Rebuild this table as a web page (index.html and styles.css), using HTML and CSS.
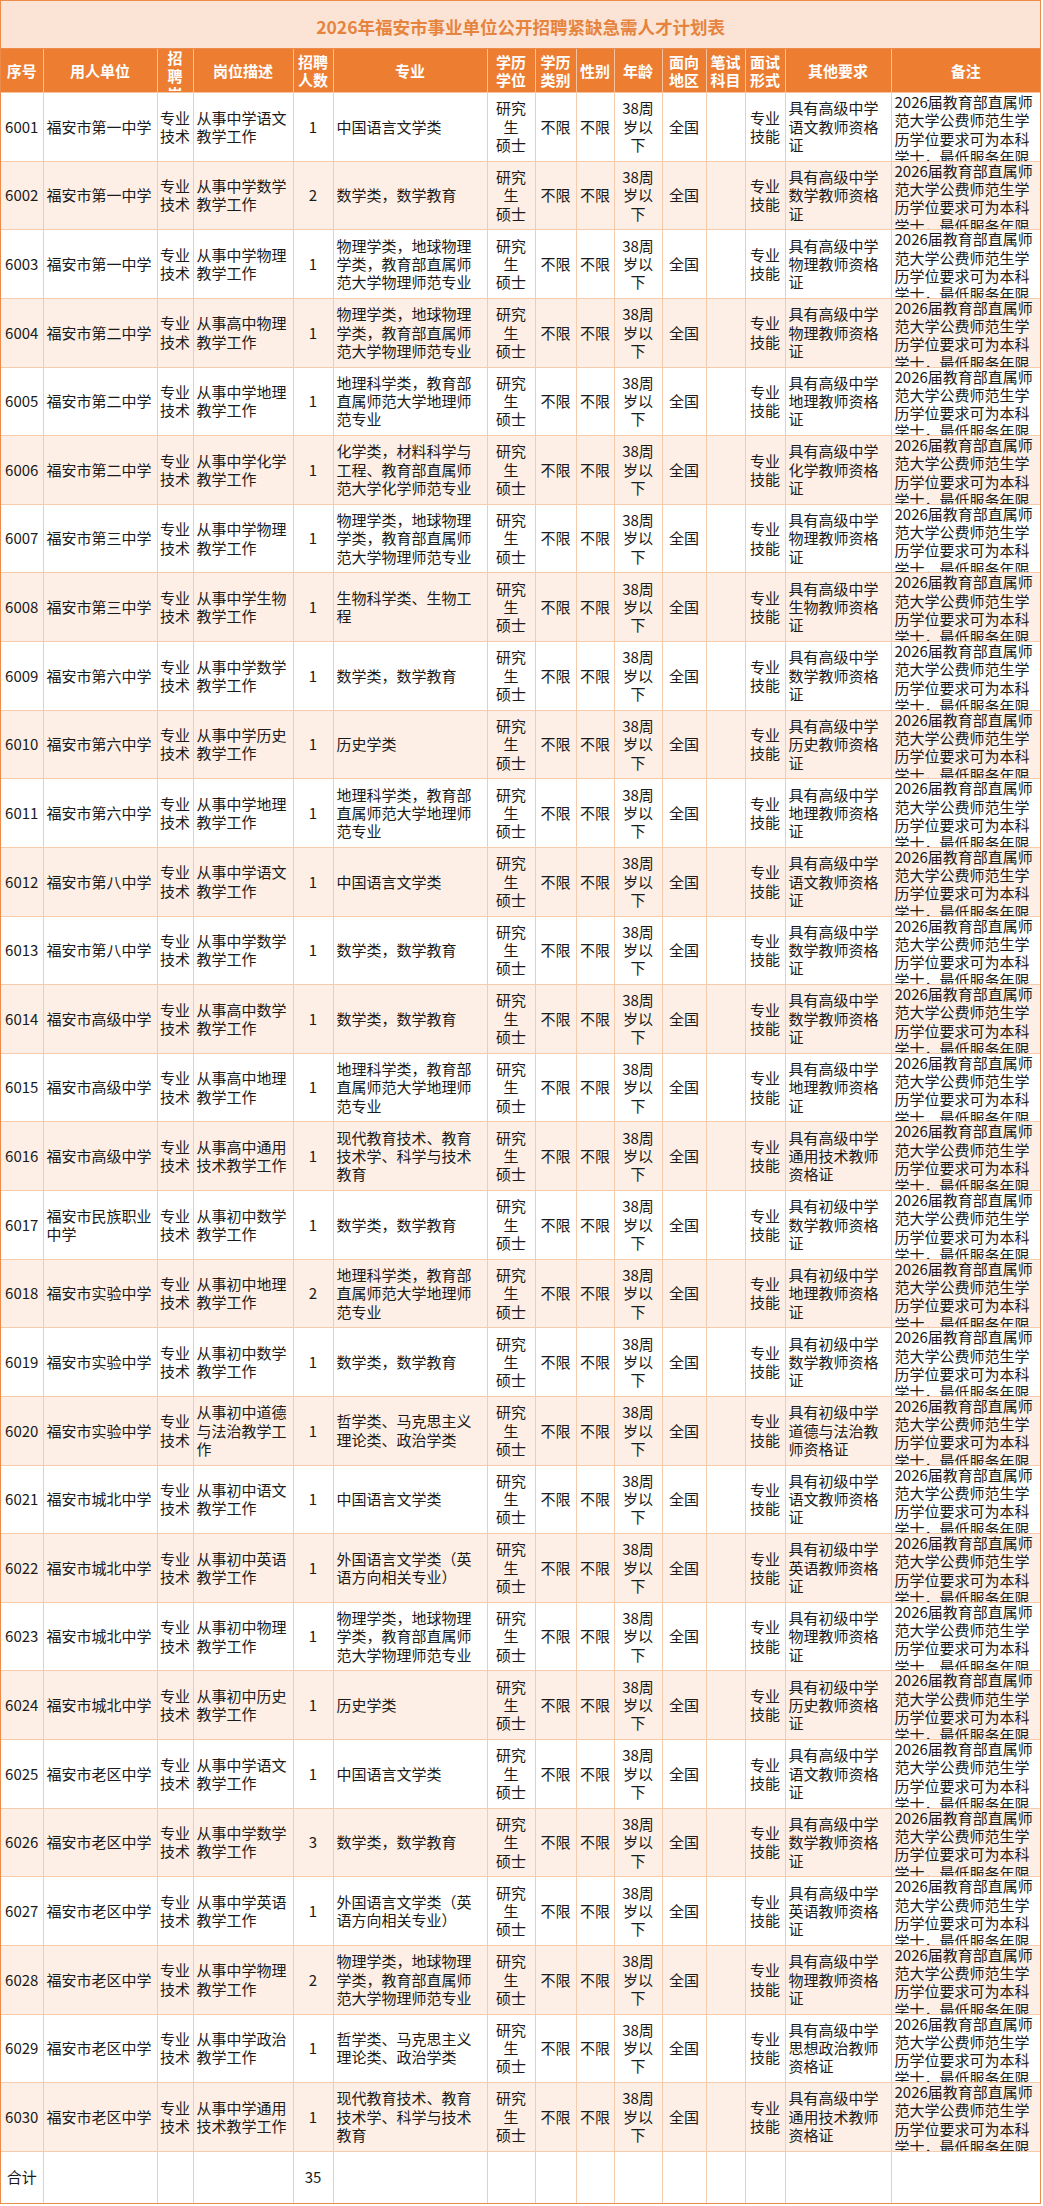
FILE: index.html
```html
<!DOCTYPE html>
<html lang="zh-CN">
<head>
<meta charset="utf-8">
<title>2026年福安市事业单位公开招聘紧缺急需人才计划表</title>
<link rel="stylesheet" href="styles.css">
</head>
<body>
<div class="sheet">
<table class="grid">
<colgroup>
<col style="width:42px"><col style="width:114px"><col style="width:36px"><col style="width:100px"><col style="width:40px"><col style="width:154px"><col style="width:48px"><col style="width:41px"><col style="width:38px"><col style="width:48px"><col style="width:44px"><col style="width:39px"><col style="width:40px"><col style="width:106px"><col style="width:149px">
</colgroup>
<tr class="title"><td colspan="15" class="c"><div class="b">2026年福安市事业单位公开招聘紧缺急需人才计划表</div></td></tr>
<tr class="hd">
<td class="c"><div class="b">序号</div></td>
<td class="c"><div class="b">用人单位</div></td>
<td class="c"><div class="b">招<br>聘<br>岗<br>位</div></td>
<td class="c"><div class="b">岗位描述</div></td>
<td class="c"><div class="b">招聘<br>人数</div></td>
<td class="c"><div class="b">专业</div></td>
<td class="c"><div class="b">学历<br>学位</div></td>
<td class="c"><div class="b">学历<br>类别</div></td>
<td class="c"><div class="b">性别</div></td>
<td class="c"><div class="b">年龄</div></td>
<td class="c"><div class="b">面向<br>地区</div></td>
<td class="c"><div class="b">笔试<br>科目</div></td>
<td class="c"><div class="b">面试<br>形式</div></td>
<td class="c"><div class="b">其他要求</div></td>
<td class="c"><div class="b">备注</div></td>
</tr>
<tr><td class="c"><div class="b">6001</div></td><td><div class="b">福安市第一中学</div></td><td class="c"><div class="b">专业<br>技术</div></td><td><div class="b">从事中学语文教学工作</div></td><td class="c"><div class="b">1</div></td><td><div class="b">中国语言文学类</div></td><td class="c"><div class="b">研究<br>生<br>硕士</div></td><td class="c"><div class="b">不限</div></td><td class="c"><div class="b">不限</div></td><td class="c"><div class="b">38周<br>岁以<br>下</div></td><td class="c"><div class="b">全国</div></td><td><div class="b"></div></td><td class="c"><div class="b">专业<br>技能</div></td><td><div class="b">具有高级中学语文教师资格证</div></td><td><div class="b">2026届教育部直属师范大学公费师范生学历学位要求可为本科学士，最低服务年限</div></td></tr>
<tr><td class="c"><div class="b">6002</div></td><td><div class="b">福安市第一中学</div></td><td class="c"><div class="b">专业<br>技术</div></td><td><div class="b">从事中学数学教学工作</div></td><td class="c"><div class="b">2</div></td><td><div class="b">数学类，数学教育</div></td><td class="c"><div class="b">研究<br>生<br>硕士</div></td><td class="c"><div class="b">不限</div></td><td class="c"><div class="b">不限</div></td><td class="c"><div class="b">38周<br>岁以<br>下</div></td><td class="c"><div class="b">全国</div></td><td><div class="b"></div></td><td class="c"><div class="b">专业<br>技能</div></td><td><div class="b">具有高级中学数学教师资格证</div></td><td><div class="b">2026届教育部直属师范大学公费师范生学历学位要求可为本科学士，最低服务年限</div></td></tr>
<tr><td class="c"><div class="b">6003</div></td><td><div class="b">福安市第一中学</div></td><td class="c"><div class="b">专业<br>技术</div></td><td><div class="b">从事中学物理教学工作</div></td><td class="c"><div class="b">1</div></td><td><div class="b">物理学类，地球物理学类，教育部直属师范大学物理师范专业</div></td><td class="c"><div class="b">研究<br>生<br>硕士</div></td><td class="c"><div class="b">不限</div></td><td class="c"><div class="b">不限</div></td><td class="c"><div class="b">38周<br>岁以<br>下</div></td><td class="c"><div class="b">全国</div></td><td><div class="b"></div></td><td class="c"><div class="b">专业<br>技能</div></td><td><div class="b">具有高级中学物理教师资格证</div></td><td><div class="b">2026届教育部直属师范大学公费师范生学历学位要求可为本科学士，最低服务年限</div></td></tr>
<tr><td class="c"><div class="b">6004</div></td><td><div class="b">福安市第二中学</div></td><td class="c"><div class="b">专业<br>技术</div></td><td><div class="b">从事高中物理教学工作</div></td><td class="c"><div class="b">1</div></td><td><div class="b">物理学类，地球物理学类，教育部直属师范大学物理师范专业</div></td><td class="c"><div class="b">研究<br>生<br>硕士</div></td><td class="c"><div class="b">不限</div></td><td class="c"><div class="b">不限</div></td><td class="c"><div class="b">38周<br>岁以<br>下</div></td><td class="c"><div class="b">全国</div></td><td><div class="b"></div></td><td class="c"><div class="b">专业<br>技能</div></td><td><div class="b">具有高级中学物理教师资格证</div></td><td><div class="b">2026届教育部直属师范大学公费师范生学历学位要求可为本科学士，最低服务年限</div></td></tr>
<tr><td class="c"><div class="b">6005</div></td><td><div class="b">福安市第二中学</div></td><td class="c"><div class="b">专业<br>技术</div></td><td><div class="b">从事中学地理教学工作</div></td><td class="c"><div class="b">1</div></td><td><div class="b">地理科学类，教育部直属师范大学地理师范专业</div></td><td class="c"><div class="b">研究<br>生<br>硕士</div></td><td class="c"><div class="b">不限</div></td><td class="c"><div class="b">不限</div></td><td class="c"><div class="b">38周<br>岁以<br>下</div></td><td class="c"><div class="b">全国</div></td><td><div class="b"></div></td><td class="c"><div class="b">专业<br>技能</div></td><td><div class="b">具有高级中学地理教师资格证</div></td><td><div class="b">2026届教育部直属师范大学公费师范生学历学位要求可为本科学士，最低服务年限</div></td></tr>
<tr><td class="c"><div class="b">6006</div></td><td><div class="b">福安市第二中学</div></td><td class="c"><div class="b">专业<br>技术</div></td><td><div class="b">从事中学化学教学工作</div></td><td class="c"><div class="b">1</div></td><td><div class="b">化学类，材料科学与工程、教育部直属师范大学化学师范专业</div></td><td class="c"><div class="b">研究<br>生<br>硕士</div></td><td class="c"><div class="b">不限</div></td><td class="c"><div class="b">不限</div></td><td class="c"><div class="b">38周<br>岁以<br>下</div></td><td class="c"><div class="b">全国</div></td><td><div class="b"></div></td><td class="c"><div class="b">专业<br>技能</div></td><td><div class="b">具有高级中学化学教师资格证</div></td><td><div class="b">2026届教育部直属师范大学公费师范生学历学位要求可为本科学士，最低服务年限</div></td></tr>
<tr><td class="c"><div class="b">6007</div></td><td><div class="b">福安市第三中学</div></td><td class="c"><div class="b">专业<br>技术</div></td><td><div class="b">从事中学物理教学工作</div></td><td class="c"><div class="b">1</div></td><td><div class="b">物理学类，地球物理学类，教育部直属师范大学物理师范专业</div></td><td class="c"><div class="b">研究<br>生<br>硕士</div></td><td class="c"><div class="b">不限</div></td><td class="c"><div class="b">不限</div></td><td class="c"><div class="b">38周<br>岁以<br>下</div></td><td class="c"><div class="b">全国</div></td><td><div class="b"></div></td><td class="c"><div class="b">专业<br>技能</div></td><td><div class="b">具有高级中学物理教师资格证</div></td><td><div class="b">2026届教育部直属师范大学公费师范生学历学位要求可为本科学士，最低服务年限</div></td></tr>
<tr><td class="c"><div class="b">6008</div></td><td><div class="b">福安市第三中学</div></td><td class="c"><div class="b">专业<br>技术</div></td><td><div class="b">从事中学生物教学工作</div></td><td class="c"><div class="b">1</div></td><td><div class="b">生物科学类、生物工程</div></td><td class="c"><div class="b">研究<br>生<br>硕士</div></td><td class="c"><div class="b">不限</div></td><td class="c"><div class="b">不限</div></td><td class="c"><div class="b">38周<br>岁以<br>下</div></td><td class="c"><div class="b">全国</div></td><td><div class="b"></div></td><td class="c"><div class="b">专业<br>技能</div></td><td><div class="b">具有高级中学生物教师资格证</div></td><td><div class="b">2026届教育部直属师范大学公费师范生学历学位要求可为本科学士，最低服务年限</div></td></tr>
<tr><td class="c"><div class="b">6009</div></td><td><div class="b">福安市第六中学</div></td><td class="c"><div class="b">专业<br>技术</div></td><td><div class="b">从事中学数学教学工作</div></td><td class="c"><div class="b">1</div></td><td><div class="b">数学类，数学教育</div></td><td class="c"><div class="b">研究<br>生<br>硕士</div></td><td class="c"><div class="b">不限</div></td><td class="c"><div class="b">不限</div></td><td class="c"><div class="b">38周<br>岁以<br>下</div></td><td class="c"><div class="b">全国</div></td><td><div class="b"></div></td><td class="c"><div class="b">专业<br>技能</div></td><td><div class="b">具有高级中学数学教师资格证</div></td><td><div class="b">2026届教育部直属师范大学公费师范生学历学位要求可为本科学士，最低服务年限</div></td></tr>
<tr><td class="c"><div class="b">6010</div></td><td><div class="b">福安市第六中学</div></td><td class="c"><div class="b">专业<br>技术</div></td><td><div class="b">从事中学历史教学工作</div></td><td class="c"><div class="b">1</div></td><td><div class="b">历史学类</div></td><td class="c"><div class="b">研究<br>生<br>硕士</div></td><td class="c"><div class="b">不限</div></td><td class="c"><div class="b">不限</div></td><td class="c"><div class="b">38周<br>岁以<br>下</div></td><td class="c"><div class="b">全国</div></td><td><div class="b"></div></td><td class="c"><div class="b">专业<br>技能</div></td><td><div class="b">具有高级中学历史教师资格证</div></td><td><div class="b">2026届教育部直属师范大学公费师范生学历学位要求可为本科学士，最低服务年限</div></td></tr>
<tr><td class="c"><div class="b">6011</div></td><td><div class="b">福安市第六中学</div></td><td class="c"><div class="b">专业<br>技术</div></td><td><div class="b">从事中学地理教学工作</div></td><td class="c"><div class="b">1</div></td><td><div class="b">地理科学类，教育部直属师范大学地理师范专业</div></td><td class="c"><div class="b">研究<br>生<br>硕士</div></td><td class="c"><div class="b">不限</div></td><td class="c"><div class="b">不限</div></td><td class="c"><div class="b">38周<br>岁以<br>下</div></td><td class="c"><div class="b">全国</div></td><td><div class="b"></div></td><td class="c"><div class="b">专业<br>技能</div></td><td><div class="b">具有高级中学地理教师资格证</div></td><td><div class="b">2026届教育部直属师范大学公费师范生学历学位要求可为本科学士，最低服务年限</div></td></tr>
<tr><td class="c"><div class="b">6012</div></td><td><div class="b">福安市第八中学</div></td><td class="c"><div class="b">专业<br>技术</div></td><td><div class="b">从事中学语文教学工作</div></td><td class="c"><div class="b">1</div></td><td><div class="b">中国语言文学类</div></td><td class="c"><div class="b">研究<br>生<br>硕士</div></td><td class="c"><div class="b">不限</div></td><td class="c"><div class="b">不限</div></td><td class="c"><div class="b">38周<br>岁以<br>下</div></td><td class="c"><div class="b">全国</div></td><td><div class="b"></div></td><td class="c"><div class="b">专业<br>技能</div></td><td><div class="b">具有高级中学语文教师资格证</div></td><td><div class="b">2026届教育部直属师范大学公费师范生学历学位要求可为本科学士，最低服务年限</div></td></tr>
<tr><td class="c"><div class="b">6013</div></td><td><div class="b">福安市第八中学</div></td><td class="c"><div class="b">专业<br>技术</div></td><td><div class="b">从事中学数学教学工作</div></td><td class="c"><div class="b">1</div></td><td><div class="b">数学类，数学教育</div></td><td class="c"><div class="b">研究<br>生<br>硕士</div></td><td class="c"><div class="b">不限</div></td><td class="c"><div class="b">不限</div></td><td class="c"><div class="b">38周<br>岁以<br>下</div></td><td class="c"><div class="b">全国</div></td><td><div class="b"></div></td><td class="c"><div class="b">专业<br>技能</div></td><td><div class="b">具有高级中学数学教师资格证</div></td><td><div class="b">2026届教育部直属师范大学公费师范生学历学位要求可为本科学士，最低服务年限</div></td></tr>
<tr><td class="c"><div class="b">6014</div></td><td><div class="b">福安市高级中学</div></td><td class="c"><div class="b">专业<br>技术</div></td><td><div class="b">从事高中数学教学工作</div></td><td class="c"><div class="b">1</div></td><td><div class="b">数学类，数学教育</div></td><td class="c"><div class="b">研究<br>生<br>硕士</div></td><td class="c"><div class="b">不限</div></td><td class="c"><div class="b">不限</div></td><td class="c"><div class="b">38周<br>岁以<br>下</div></td><td class="c"><div class="b">全国</div></td><td><div class="b"></div></td><td class="c"><div class="b">专业<br>技能</div></td><td><div class="b">具有高级中学数学教师资格证</div></td><td><div class="b">2026届教育部直属师范大学公费师范生学历学位要求可为本科学士，最低服务年限</div></td></tr>
<tr><td class="c"><div class="b">6015</div></td><td><div class="b">福安市高级中学</div></td><td class="c"><div class="b">专业<br>技术</div></td><td><div class="b">从事高中地理教学工作</div></td><td class="c"><div class="b">1</div></td><td><div class="b">地理科学类，教育部直属师范大学地理师范专业</div></td><td class="c"><div class="b">研究<br>生<br>硕士</div></td><td class="c"><div class="b">不限</div></td><td class="c"><div class="b">不限</div></td><td class="c"><div class="b">38周<br>岁以<br>下</div></td><td class="c"><div class="b">全国</div></td><td><div class="b"></div></td><td class="c"><div class="b">专业<br>技能</div></td><td><div class="b">具有高级中学地理教师资格证</div></td><td><div class="b">2026届教育部直属师范大学公费师范生学历学位要求可为本科学士，最低服务年限</div></td></tr>
<tr><td class="c"><div class="b">6016</div></td><td><div class="b">福安市高级中学</div></td><td class="c"><div class="b">专业<br>技术</div></td><td><div class="b">从事高中通用技术教学工作</div></td><td class="c"><div class="b">1</div></td><td><div class="b">现代教育技术、教育技术学、科学与技术教育</div></td><td class="c"><div class="b">研究<br>生<br>硕士</div></td><td class="c"><div class="b">不限</div></td><td class="c"><div class="b">不限</div></td><td class="c"><div class="b">38周<br>岁以<br>下</div></td><td class="c"><div class="b">全国</div></td><td><div class="b"></div></td><td class="c"><div class="b">专业<br>技能</div></td><td><div class="b">具有高级中学通用技术教师资格证</div></td><td><div class="b">2026届教育部直属师范大学公费师范生学历学位要求可为本科学士，最低服务年限</div></td></tr>
<tr><td class="c"><div class="b">6017</div></td><td><div class="b">福安市民族职业中学</div></td><td class="c"><div class="b">专业<br>技术</div></td><td><div class="b">从事初中数学教学工作</div></td><td class="c"><div class="b">1</div></td><td><div class="b">数学类，数学教育</div></td><td class="c"><div class="b">研究<br>生<br>硕士</div></td><td class="c"><div class="b">不限</div></td><td class="c"><div class="b">不限</div></td><td class="c"><div class="b">38周<br>岁以<br>下</div></td><td class="c"><div class="b">全国</div></td><td><div class="b"></div></td><td class="c"><div class="b">专业<br>技能</div></td><td><div class="b">具有初级中学数学教师资格证</div></td><td><div class="b">2026届教育部直属师范大学公费师范生学历学位要求可为本科学士，最低服务年限</div></td></tr>
<tr><td class="c"><div class="b">6018</div></td><td><div class="b">福安市实验中学</div></td><td class="c"><div class="b">专业<br>技术</div></td><td><div class="b">从事初中地理教学工作</div></td><td class="c"><div class="b">2</div></td><td><div class="b">地理科学类，教育部直属师范大学地理师范专业</div></td><td class="c"><div class="b">研究<br>生<br>硕士</div></td><td class="c"><div class="b">不限</div></td><td class="c"><div class="b">不限</div></td><td class="c"><div class="b">38周<br>岁以<br>下</div></td><td class="c"><div class="b">全国</div></td><td><div class="b"></div></td><td class="c"><div class="b">专业<br>技能</div></td><td><div class="b">具有初级中学地理教师资格证</div></td><td><div class="b">2026届教育部直属师范大学公费师范生学历学位要求可为本科学士，最低服务年限</div></td></tr>
<tr><td class="c"><div class="b">6019</div></td><td><div class="b">福安市实验中学</div></td><td class="c"><div class="b">专业<br>技术</div></td><td><div class="b">从事初中数学教学工作</div></td><td class="c"><div class="b">1</div></td><td><div class="b">数学类，数学教育</div></td><td class="c"><div class="b">研究<br>生<br>硕士</div></td><td class="c"><div class="b">不限</div></td><td class="c"><div class="b">不限</div></td><td class="c"><div class="b">38周<br>岁以<br>下</div></td><td class="c"><div class="b">全国</div></td><td><div class="b"></div></td><td class="c"><div class="b">专业<br>技能</div></td><td><div class="b">具有初级中学数学教师资格证</div></td><td><div class="b">2026届教育部直属师范大学公费师范生学历学位要求可为本科学士，最低服务年限</div></td></tr>
<tr><td class="c"><div class="b">6020</div></td><td><div class="b">福安市实验中学</div></td><td class="c"><div class="b">专业<br>技术</div></td><td><div class="b">从事初中道德与法治教学工作</div></td><td class="c"><div class="b">1</div></td><td><div class="b">哲学类、马克思主义理论类、政治学类</div></td><td class="c"><div class="b">研究<br>生<br>硕士</div></td><td class="c"><div class="b">不限</div></td><td class="c"><div class="b">不限</div></td><td class="c"><div class="b">38周<br>岁以<br>下</div></td><td class="c"><div class="b">全国</div></td><td><div class="b"></div></td><td class="c"><div class="b">专业<br>技能</div></td><td><div class="b">具有初级中学道德与法治教师资格证</div></td><td><div class="b">2026届教育部直属师范大学公费师范生学历学位要求可为本科学士，最低服务年限</div></td></tr>
<tr><td class="c"><div class="b">6021</div></td><td><div class="b">福安市城北中学</div></td><td class="c"><div class="b">专业<br>技术</div></td><td><div class="b">从事初中语文教学工作</div></td><td class="c"><div class="b">1</div></td><td><div class="b">中国语言文学类</div></td><td class="c"><div class="b">研究<br>生<br>硕士</div></td><td class="c"><div class="b">不限</div></td><td class="c"><div class="b">不限</div></td><td class="c"><div class="b">38周<br>岁以<br>下</div></td><td class="c"><div class="b">全国</div></td><td><div class="b"></div></td><td class="c"><div class="b">专业<br>技能</div></td><td><div class="b">具有初级中学语文教师资格证</div></td><td><div class="b">2026届教育部直属师范大学公费师范生学历学位要求可为本科学士，最低服务年限</div></td></tr>
<tr><td class="c"><div class="b">6022</div></td><td><div class="b">福安市城北中学</div></td><td class="c"><div class="b">专业<br>技术</div></td><td><div class="b">从事初中英语教学工作</div></td><td class="c"><div class="b">1</div></td><td><div class="b">外国语言文学类（英语方向相关专业）</div></td><td class="c"><div class="b">研究<br>生<br>硕士</div></td><td class="c"><div class="b">不限</div></td><td class="c"><div class="b">不限</div></td><td class="c"><div class="b">38周<br>岁以<br>下</div></td><td class="c"><div class="b">全国</div></td><td><div class="b"></div></td><td class="c"><div class="b">专业<br>技能</div></td><td><div class="b">具有初级中学英语教师资格证</div></td><td><div class="b">2026届教育部直属师范大学公费师范生学历学位要求可为本科学士，最低服务年限</div></td></tr>
<tr><td class="c"><div class="b">6023</div></td><td><div class="b">福安市城北中学</div></td><td class="c"><div class="b">专业<br>技术</div></td><td><div class="b">从事初中物理教学工作</div></td><td class="c"><div class="b">1</div></td><td><div class="b">物理学类，地球物理学类，教育部直属师范大学物理师范专业</div></td><td class="c"><div class="b">研究<br>生<br>硕士</div></td><td class="c"><div class="b">不限</div></td><td class="c"><div class="b">不限</div></td><td class="c"><div class="b">38周<br>岁以<br>下</div></td><td class="c"><div class="b">全国</div></td><td><div class="b"></div></td><td class="c"><div class="b">专业<br>技能</div></td><td><div class="b">具有初级中学物理教师资格证</div></td><td><div class="b">2026届教育部直属师范大学公费师范生学历学位要求可为本科学士，最低服务年限</div></td></tr>
<tr><td class="c"><div class="b">6024</div></td><td><div class="b">福安市城北中学</div></td><td class="c"><div class="b">专业<br>技术</div></td><td><div class="b">从事初中历史教学工作</div></td><td class="c"><div class="b">1</div></td><td><div class="b">历史学类</div></td><td class="c"><div class="b">研究<br>生<br>硕士</div></td><td class="c"><div class="b">不限</div></td><td class="c"><div class="b">不限</div></td><td class="c"><div class="b">38周<br>岁以<br>下</div></td><td class="c"><div class="b">全国</div></td><td><div class="b"></div></td><td class="c"><div class="b">专业<br>技能</div></td><td><div class="b">具有初级中学历史教师资格证</div></td><td><div class="b">2026届教育部直属师范大学公费师范生学历学位要求可为本科学士，最低服务年限</div></td></tr>
<tr><td class="c"><div class="b">6025</div></td><td><div class="b">福安市老区中学</div></td><td class="c"><div class="b">专业<br>技术</div></td><td><div class="b">从事中学语文教学工作</div></td><td class="c"><div class="b">1</div></td><td><div class="b">中国语言文学类</div></td><td class="c"><div class="b">研究<br>生<br>硕士</div></td><td class="c"><div class="b">不限</div></td><td class="c"><div class="b">不限</div></td><td class="c"><div class="b">38周<br>岁以<br>下</div></td><td class="c"><div class="b">全国</div></td><td><div class="b"></div></td><td class="c"><div class="b">专业<br>技能</div></td><td><div class="b">具有高级中学语文教师资格证</div></td><td><div class="b">2026届教育部直属师范大学公费师范生学历学位要求可为本科学士，最低服务年限</div></td></tr>
<tr><td class="c"><div class="b">6026</div></td><td><div class="b">福安市老区中学</div></td><td class="c"><div class="b">专业<br>技术</div></td><td><div class="b">从事中学数学教学工作</div></td><td class="c"><div class="b">3</div></td><td><div class="b">数学类，数学教育</div></td><td class="c"><div class="b">研究<br>生<br>硕士</div></td><td class="c"><div class="b">不限</div></td><td class="c"><div class="b">不限</div></td><td class="c"><div class="b">38周<br>岁以<br>下</div></td><td class="c"><div class="b">全国</div></td><td><div class="b"></div></td><td class="c"><div class="b">专业<br>技能</div></td><td><div class="b">具有高级中学数学教师资格证</div></td><td><div class="b">2026届教育部直属师范大学公费师范生学历学位要求可为本科学士，最低服务年限</div></td></tr>
<tr><td class="c"><div class="b">6027</div></td><td><div class="b">福安市老区中学</div></td><td class="c"><div class="b">专业<br>技术</div></td><td><div class="b">从事中学英语教学工作</div></td><td class="c"><div class="b">1</div></td><td><div class="b">外国语言文学类（英语方向相关专业）</div></td><td class="c"><div class="b">研究<br>生<br>硕士</div></td><td class="c"><div class="b">不限</div></td><td class="c"><div class="b">不限</div></td><td class="c"><div class="b">38周<br>岁以<br>下</div></td><td class="c"><div class="b">全国</div></td><td><div class="b"></div></td><td class="c"><div class="b">专业<br>技能</div></td><td><div class="b">具有高级中学英语教师资格证</div></td><td><div class="b">2026届教育部直属师范大学公费师范生学历学位要求可为本科学士，最低服务年限</div></td></tr>
<tr><td class="c"><div class="b">6028</div></td><td><div class="b">福安市老区中学</div></td><td class="c"><div class="b">专业<br>技术</div></td><td><div class="b">从事中学物理教学工作</div></td><td class="c"><div class="b">2</div></td><td><div class="b">物理学类，地球物理学类，教育部直属师范大学物理师范专业</div></td><td class="c"><div class="b">研究<br>生<br>硕士</div></td><td class="c"><div class="b">不限</div></td><td class="c"><div class="b">不限</div></td><td class="c"><div class="b">38周<br>岁以<br>下</div></td><td class="c"><div class="b">全国</div></td><td><div class="b"></div></td><td class="c"><div class="b">专业<br>技能</div></td><td><div class="b">具有高级中学物理教师资格证</div></td><td><div class="b">2026届教育部直属师范大学公费师范生学历学位要求可为本科学士，最低服务年限</div></td></tr>
<tr><td class="c"><div class="b">6029</div></td><td><div class="b">福安市老区中学</div></td><td class="c"><div class="b">专业<br>技术</div></td><td><div class="b">从事中学政治教学工作</div></td><td class="c"><div class="b">1</div></td><td><div class="b">哲学类、马克思主义理论类、政治学类</div></td><td class="c"><div class="b">研究<br>生<br>硕士</div></td><td class="c"><div class="b">不限</div></td><td class="c"><div class="b">不限</div></td><td class="c"><div class="b">38周<br>岁以<br>下</div></td><td class="c"><div class="b">全国</div></td><td><div class="b"></div></td><td class="c"><div class="b">专业<br>技能</div></td><td><div class="b">具有高级中学思想政治教师资格证</div></td><td><div class="b">2026届教育部直属师范大学公费师范生学历学位要求可为本科学士，最低服务年限</div></td></tr>
<tr><td class="c"><div class="b">6030</div></td><td><div class="b">福安市老区中学</div></td><td class="c"><div class="b">专业<br>技术</div></td><td><div class="b">从事中学通用技术教学工作</div></td><td class="c"><div class="b">1</div></td><td><div class="b">现代教育技术、教育技术学、科学与技术教育</div></td><td class="c"><div class="b">研究<br>生<br>硕士</div></td><td class="c"><div class="b">不限</div></td><td class="c"><div class="b">不限</div></td><td class="c"><div class="b">38周<br>岁以<br>下</div></td><td class="c"><div class="b">全国</div></td><td><div class="b"></div></td><td class="c"><div class="b">专业<br>技能</div></td><td><div class="b">具有高级中学通用技术教师资格证</div></td><td><div class="b">2026届教育部直属师范大学公费师范生学历学位要求可为本科学士，最低服务年限</div></td></tr>
<tr class="total"><td class="c"><div class="b">合计</div></td><td><div class="b"></div></td><td><div class="b"></div></td><td><div class="b"></div></td><td class="c"><div class="b">35</div></td><td><div class="b"></div></td><td><div class="b"></div></td><td><div class="b"></div></td><td><div class="b"></div></td><td><div class="b"></div></td><td><div class="b"></div></td><td><div class="b"></div></td><td><div class="b"></div></td><td><div class="b"></div></td><td><div class="b"></div></td></tr>
</table>
</div>
</body>
</html>
```

FILE: styles.css
```css
* {
  box-sizing: border-box;
}

html,
body {
  margin: 0;
  padding: 0;
  background: #ffffff;
}

body {
  font-family: "Noto Sans CJK SC", "Liberation Sans", sans-serif;
  font-size: 15px;
  color: #1a1a1a;
}

.sheet {
  width: 1041px;
  border: 1px solid #ec8b4a;
}

.grid {
  width: 1039px;
  table-layout: fixed;
  border-collapse: collapse;
  border-style: hidden;
}

.grid td {
  border: 1px solid #f6cbab;
  padding: 0;
  text-align: left;
  vertical-align: middle;
  overflow: hidden;
}

.grid td.c {
  text-align: center;
}

.b {
  display: flex;
  flex-direction: column;
  justify-content: safe center;
  height: 67.63px;
  overflow: hidden;
  padding: 0 3px;
  line-height: 18.3px;
}

.grid td:nth-child(3) .b,
.grid td:nth-child(13) .b {
  padding: 0;
  white-space: nowrap;
}

.grid tr:nth-child(even) td {
  background: #fdefe6;
}

.grid tr:nth-child(odd) td {
  background: #ffffff;
}

.grid tr.title td {
  background: #fbe4d5;
  border-bottom-color: #ec8b4a;
}

.title .b {
  height: 47px;
  font-size: 17.5px;
  font-weight: bold;
  color: #e6843f;
  line-height: 22px;
  padding-top: 4px;
  white-space: nowrap;
}

.grid tr.hd td {
  background: #ed7d31;
  color: #ffffff;
  font-weight: bold;
  border-color: #f6c3a0;
}

.hd .b {
  height: 43px;
  padding-top: 1px;
  line-height: 18px;
}

.grid tr.total td {
  background: #ffffff;
}

.total .b {
  height: 51px;
}
```
